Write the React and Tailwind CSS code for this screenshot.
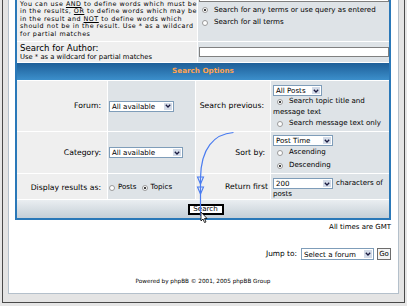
import React from 'react'

const Radio = ({ checked }) => (
  <span className="flex w-[6px] h-[6px] rounded-full border border-[#9a9a9a] bg-white shrink-0 items-center justify-center">
    {checked && <span className="w-[2px] h-[2px] rounded-full bg-black" />}
  </span>
)

const Select = ({ label, className }) => (
  <div className={`flex border border-[#7f9db9] bg-white ${className}`}>
    <span className="flex-1 pl-[2px] text-[7.1px] leading-[9px] text-black whitespace-nowrap overflow-hidden self-center">
      {label}
    </span>
    <span className="w-[10px] bg-[#d3dbe8] border border-white flex items-center justify-center">
      <svg width="6" height="4" viewBox="0 0 6 4">
        <path d="M0.8 0.8 L3 3 L5.2 0.8" fill="none" stroke="#1a1a40" strokeWidth="1.3" />
      </svg>
    </span>
  </div>
)

const Label = ({ children, className = '' }) => (
  <div className={`bg-[#efefef] flex items-center justify-end text-[7.7px] text-black whitespace-nowrap ${className}`}>
    {children}
  </div>
)

const Option = ({ checked, children, className = '' }) => (
  <div className={`flex items-center gap-[6px] pl-[4px] text-[7.1px] text-black whitespace-nowrap ${className}`}>
    <Radio checked={checked} />
    <span>{children}</span>
  </div>
)

export default function App() {
  return (
    <div className="relative w-[407px] h-[306px] bg-[#e6e6e6] overflow-hidden font-['DejaVu_Sans',sans-serif]">
      <div className="ml-[2px] w-[403px] h-[303px] bg-[#e4e4e4] border-x border-b border-[#4a4a4a] px-[5px] pb-[8px]">
        <div className="h-full bg-white border-x border-b border-[#b4c0cb] pl-[6px] pr-[7px]">
          {/* Search form table */}
          <div className="border-x-2 border-b-2 border-[#2a78b8] bg-white flex flex-col gap-px">
            {/* Keywords help */}
            <div className="grid grid-cols-[180px_191px] gap-px h-[41px]">
              <div className="bg-[#efefef] pl-[3px] pt-[1px] text-[6.4px] leading-[7.4px] tracking-[0.5px] text-black whitespace-nowrap overflow-hidden">
                You can use <u>AND</u> to define words which must be<br />
                in the results, <u>OR</u> to define words which may be<br />
                in the result and <u>NOT</u> to define words which<br />
                should not be in the result. Use * as a wildcard<br />
                for partial matches
              </div>
              <div className="bg-[#dee3e7]">
                <div className="ml-[1px] h-[2px] w-[190px] border-x border-b border-[#808080] bg-white" />
                <Option checked className="mt-[2px] h-[12px]">Search for any terms or use query as entered</Option>
                <Option className="h-[13px]">Search for all terms</Option>
              </div>
            </div>

            {/* Author */}
            <div className="grid grid-cols-[180px_191px] gap-px h-[20px]">
              <div className="bg-[#efefef] pl-[3px] pt-[1px] text-black">
                <div className="text-[8.6px] leading-[10px]">Search for Author:</div>
                <div className="text-[6.8px] leading-[8px]">Use * as a wildcard for partial matches</div>
              </div>
              <div className="bg-[#dee3e7]">
                <div className="ml-[1px] mt-[5px] h-[10px] w-[190px] border border-[#808080] bg-white" />
              </div>
            </div>

            {/* Header */}
            <div className="h-[17px] bg-linear-to-b from-[#1e5f98] to-[#3c8fcb] flex items-center justify-center">
              <span className="text-[7.2px] font-bold text-[#ffa34f]">Search Options</span>
            </div>

            {/* Options */}
            <div className="grid grid-cols-[90px_87px_74px_118px] grid-rows-[50px_41px_25px] gap-px">
              <Label className="pr-[6px]">Forum:</Label>
              <div className="bg-[#dee3e7] flex items-center pl-[1px]">
                <Select label="All available" className="w-[65px] h-[11px]" />
              </div>
              <Label className="pr-[6px]">Search previous:</Label>
              <div className="bg-[#dee3e7] pl-[2px] pt-[4px]">
                <Select label="All Posts" className="w-[49px] h-[11px]" />
                <Option checked className="h-[11px]">Search topic title and</Option>
                <div className="h-[11px] flex items-center text-[7.1px] text-black">message text</div>
                <Option className="h-[11px]">Search message text only</Option>
              </div>

              <Label className="pr-[6px]">Category:</Label>
              <div className="bg-[#dee3e7] flex items-center pl-[1px]">
                <Select label="All available" className="w-[74px] h-[11px]" />
              </div>
              <Label className="pr-[5px]">Sort by:</Label>
              <div className="bg-[#dee3e7] pl-[2px] pt-[3px]">
                <Select label="Post Time" className="w-[60px] h-[11px]" />
                <Option className="h-[13px]">Ascending</Option>
                <Option checked className="h-[13px]">Descending</Option>
              </div>

              <Label className="pr-[6px] pt-[2px]">Display results as:</Label>
              <div className="bg-[#dee3e7] flex items-center pl-[1px] pt-[2px] gap-[3px] text-[7.1px] text-black whitespace-nowrap">
                <Radio />
                <span>Posts</span>
                <span className="ml-[2px]"><Radio checked /></span>
                <span>Topics</span>
              </div>
              <Label className="pr-[2px] pt-[1px]">Return first</Label>
              <div className="bg-[#dee3e7] pl-[2px] pt-[4px] text-[7.1px] text-black whitespace-nowrap">
                <div className="flex items-center h-[11px]">
                  <Select label="200" className="w-[60px] h-[11px]" />
                  <span className="ml-[3px]">characters of</span>
                </div>
                <div className="leading-[9px]">posts</div>
              </div>
            </div>

            {/* Bottom bar */}
            <div className="h-[18px] bg-linear-to-b from-[#eaeef1] to-[#c5cfd7] flex items-center justify-center">
              <button className="ml-[5px] w-[36px] h-[11px] border-2 border-black bg-white text-[7.1px] leading-none text-black flex items-center justify-center">
                Search
              </button>
            </div>
          </div>

          {/* Footer */}
          <div className="mt-[3px] text-right text-[7px] leading-[8px] text-black">All times are GMT</div>
          <div className="mt-[17px] flex justify-end items-center h-[12px]">
            <span className="text-[7.4px] text-black mr-[4px]">Jump to:</span>
            <Select label="Select a forum" className="w-[73px] h-[12px]" />
            <span className="ml-[3px] w-[14px] h-[12px] border border-[#6d6d6d] bg-[#f4f4f4] text-[7px] text-black flex items-center justify-center">
              Go
            </span>
          </div>
          <div className="mt-[18px] text-center text-[5.7px] leading-[7px] text-black">
            Powered by phpBB © 2001, 2005 phpBB Group
          </div>
        </div>
      </div>

      {/* Annotation arrow and cursor */}
      <svg className="absolute left-0 top-0 pointer-events-none" width="407" height="306" viewBox="0 0 407 306">
        <path d="M233.5 132.5 C214 134 201 148 200.5 178 L200.5 216" fill="none" stroke="#4a7cf0" strokeWidth="1.2" />
        <path d="M197.5 177 L203.5 177 L200.5 184 Z" fill="none" stroke="#4a7cf0" strokeWidth="1.1" />
        <path d="M197.5 187 L203.5 187 L200.5 194 Z" fill="none" stroke="#4a7cf0" strokeWidth="1.1" />
        <path d="M201 212 L201 221 L203 219 L204.5 222.5 L206 222 L204.5 218.5 L207 218.5 Z" fill="#fff" stroke="#000" strokeWidth="0.8" />
      </svg>
    </div>
  )
}
